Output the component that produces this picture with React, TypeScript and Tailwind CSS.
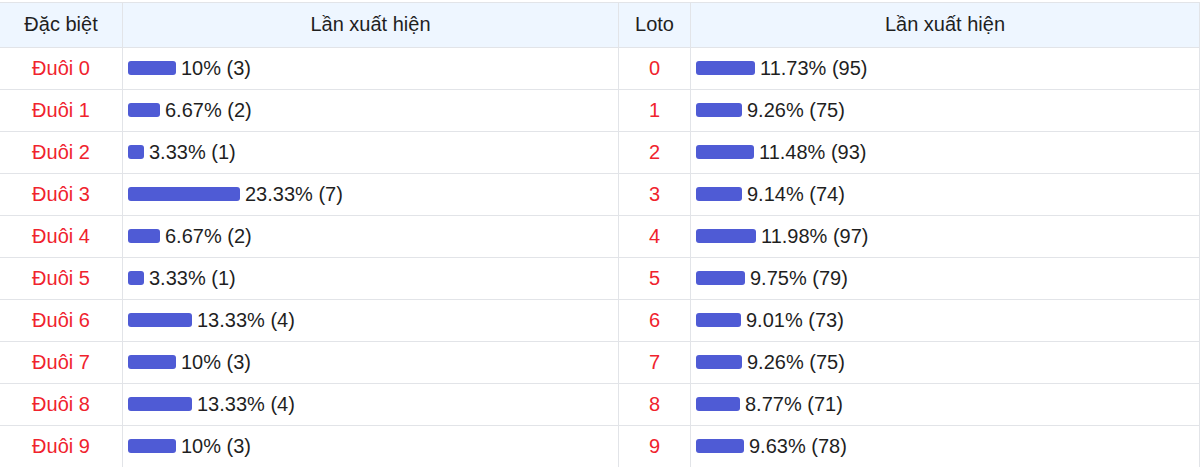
const DAC_BIET = [
  { label: "Đuôi 0", pct: 10, text: "10% (3)" },
  { label: "Đuôi 1", pct: 6.67, text: "6.67% (2)" },
  { label: "Đuôi 2", pct: 3.33, text: "3.33% (1)" },
  { label: "Đuôi 3", pct: 23.33, text: "23.33% (7)" },
  { label: "Đuôi 4", pct: 6.67, text: "6.67% (2)" },
  { label: "Đuôi 5", pct: 3.33, text: "3.33% (1)" },
  { label: "Đuôi 6", pct: 13.33, text: "13.33% (4)" },
  { label: "Đuôi 7", pct: 10, text: "10% (3)" },
  { label: "Đuôi 8", pct: 13.33, text: "13.33% (4)" },
  { label: "Đuôi 9", pct: 10, text: "10% (3)" },
];

const LOTO = [
  { label: "0", pct: 11.73, text: "11.73% (95)" },
  { label: "1", pct: 9.26, text: "9.26% (75)" },
  { label: "2", pct: 11.48, text: "11.48% (93)" },
  { label: "3", pct: 9.14, text: "9.14% (74)" },
  { label: "4", pct: 11.98, text: "11.98% (97)" },
  { label: "5", pct: 9.75, text: "9.75% (79)" },
  { label: "6", pct: 9.01, text: "9.01% (73)" },
  { label: "7", pct: 9.26, text: "9.26% (75)" },
  { label: "8", pct: 8.77, text: "8.77% (71)" },
  { label: "9", pct: 9.63, text: "9.63% (78)" },
];

// thanh ngang + phần trăm
const Bar = ({ pct, scale, text }: { pct: number; scale: number; text: string }) => (
  <div className="flex items-center gap-[5px]">
    <div className="h-[14px] rounded-[3px] bg-[#4f5bd5]" style={{ width: Math.round(pct * scale) }} />
    <span>{text}</span>
  </div>
);

export default function App() {
  return (
    <div className="bg-white pt-[2px] font-['Liberation_Sans',Arial,sans-serif] text-[20px] text-[#1f1f1f]">
      <table className="-ml-px w-[1201px] table-fixed border-collapse">
        <colgroup>
          <col className="w-[123px]" />
          <col className="w-[496px]" />
          <col className="w-[72px]" />
          <col />
        </colgroup>
        <thead>
          <tr className="h-[45px] bg-[#eef6ff]">
            <th className="border border-[#e2e4e8] pb-[2px] font-normal">Đặc biệt</th>
            <th className="border border-[#e2e4e8] pb-[2px] font-normal">Lần xuất hiện</th>
            <th className="border border-[#e2e4e8] pb-[2px] font-normal">Loto</th>
            <th className="border border-[#e2e4e8] pb-[2px] font-normal">Lần xuất hiện</th>
          </tr>
        </thead>
        <tbody>
          {DAC_BIET.map((row, i) => (
            <tr key={row.label} className="h-[42px]">
              <td className="border border-[#e2e4e8] pb-[2px] text-center text-[#f0232d]">{row.label}</td>
              <td className="border border-[#e2e4e8] px-[5px] pb-[2px]">
                <Bar pct={row.pct} scale={4.82} text={row.text} />
              </td>
              <td className="border border-[#e2e4e8] pb-[2px] text-center text-[#f0232d]">{LOTO[i].label}</td>
              <td className="border border-[#e2e4e8] px-[5px] pb-[2px]">
                <Bar pct={LOTO[i].pct} scale={5.02} text={LOTO[i].text} />
              </td>
            </tr>
          ))}
        </tbody>
      </table>
    </div>
  );
}
